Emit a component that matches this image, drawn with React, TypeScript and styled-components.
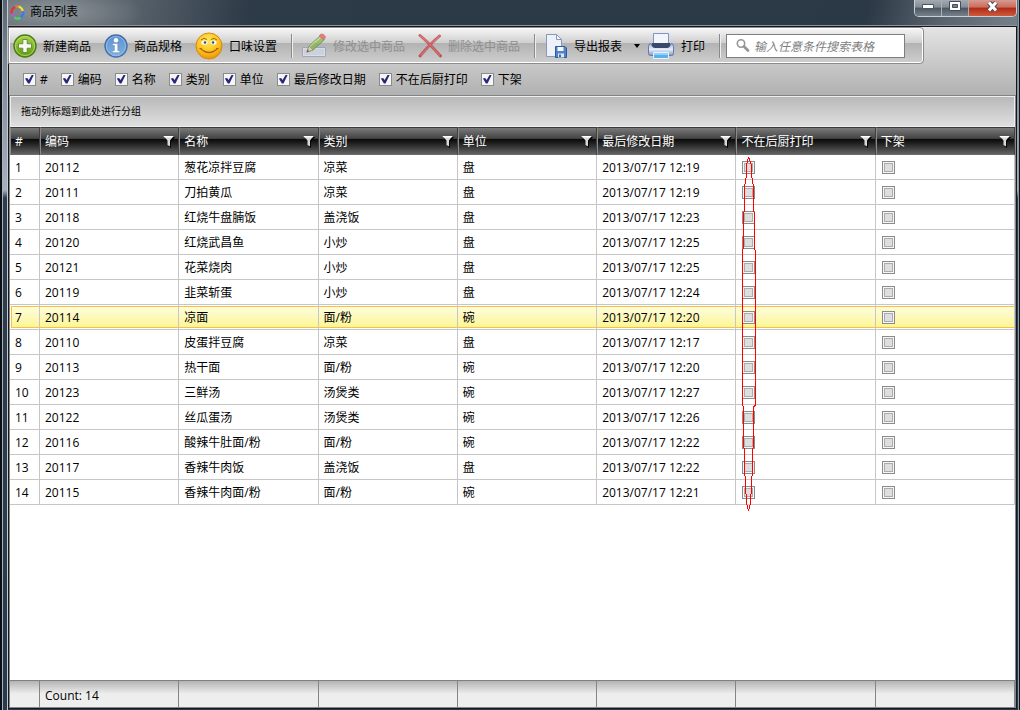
import React from 'react';
import styled, { createGlobalStyle, css } from 'styled-components';

const GlobalStyle = createGlobalStyle`
  * { box-sizing: border-box; }
  body {
    margin: 0;
    font-family: "Open Sans", "Noto Sans CJK SC", sans-serif;
    font-size: 12px;
    line-height: 16px;
    color: #000;
  }
  button, input { font: inherit; color: inherit; }
`;

const Frame = styled.div`
  min-height: 100vh;
  display: flex;
  flex-direction: column;
  padding: 0 3px 1px 8px;
  background:
    linear-gradient(90deg, #0b1016 2px, #a9b3bb 2px 3px, transparent 3px 7px, #c3cad1 7px 8px, transparent 8px),
    linear-gradient(270deg, #10161d 1px, #8e9aa4 1px 2px, transparent 2px),
    linear-gradient(180deg, #59636c 0, #7c8792 60px, #a7b1be 190px, #2e3c4b 198px, #2b3a4a 100%);
`;

const TitleBar = styled.header`
  display: flex;
  align-items: flex-start;
  justify-content: space-between;
  height: 26px;
  border-bottom: 1px solid #8b949b;
  background:
    radial-gradient(ellipse 90px 26px at 45px 12px, rgba(160, 166, 170, 0.75), transparent),
    linear-gradient(100deg, #626b73 0, #59636c 120px, #2d3a47 240px, #2b3845 85%, #56616b 92%, #75818a 100%);
`;

const Title = styled.h1`
  display: flex;
  align-items: center;
  gap: 5px;
  margin: 4px 0 0 2px;
  font-size: 12px;
  font-weight: 400;
`;

const WindowButtons = styled.div`
  display: flex;
  height: 17px;
  border: 1px solid #c9d0d5;
  border-top: 0;
  border-radius: 0 0 5px 5px;
  overflow: hidden;
`;

const WindowButton = styled.button<{ $close?: boolean }>`
  display: flex;
  align-items: center;
  justify-content: center;
  width: ${(p) => (p.$close ? 47 : 27)}px;
  padding: 0 0 3px;
  border: 0;
  border-right: ${(p) => (p.$close ? 0 : 1)}px solid #a7b0b6;
  background: ${(p) =>
    p.$close
      ? 'linear-gradient(#d79a90 0, #c96d5f 45%, #b02a14 50%, #cf5a3c 100%)'
      : 'linear-gradient(#a4aab0 0, #848c94 45%, #4c5660 50%, #76818b 100%)'};
`;

const Client = styled.main`
  flex: 1;
  display: flex;
  flex-direction: column;
  border: 1px solid #15191d;
  background: #fff;
`;

const TopArea = styled.section`
  padding-top: 1px;
  border-bottom: 1px solid #808489;
  background: linear-gradient(#e4e4e4, #b1b1b1);
`;

const Toolbar = styled.div`
  display: flex;
  align-items: center;
  width: fit-content;
  height: 35px;
  padding-right: 17px;
  border: 1px solid #fff;
  border-radius: 0 3px 3px 0;
  outline: 1px solid #8c8c8c;
  background: linear-gradient(#f4f4f4 0, #cfcfcf 42%, #b3b3b3 44%, #cdcdcd 100%);
`;

const ToolButton = styled.button`
  display: flex;
  align-items: center;
  gap: 6px;
  height: 32px;
  padding: 0 10px 0 3px;
  border: 0;
  background: none;
  white-space: nowrap;
  &:disabled { color: #8f8f8f; }
  &:disabled svg { opacity: 0.65; }
`;

const DropButton = styled.button`
  display: flex;
  align-items: center;
  width: 12px;
  height: 32px;
  padding: 0 2px;
  border: 0;
  background: none;
`;

const Caption = styled.span`
  padding-top: 2px;
`;

const Separator = styled.span`
  width: 2px;
  height: 24px;
  margin: 0 5px 0 4px;
  border-left: 1px solid #8a8a8a;
  border-right: 1px solid #eee;
`;

const SearchBox = styled.label`
  display: flex;
  align-items: center;
  gap: 4px;
  width: 179px;
  height: 24px;
  padding: 0 8px;
  border: 1px solid #7e7e7e;
  background: #fff;
`;

const SearchInput = styled.input`
  flex: 1;
  min-width: 0;
  padding: 2px 0 0;
  border: 0;
  outline: 0;
  background: none;
  &::placeholder { color: #808080; font-style: italic; opacity: 1; }
`;

const ColumnToggles = styled.div`
  display: flex;
  align-items: center;
  gap: 13px;
  height: 32px;
  padding-left: 14px;
`;

const Toggle = styled.label`
  display: flex;
  align-items: center;
  gap: 4px;
`;

const CheckBox = styled.input`
  appearance: none;
  display: block;
  flex: none;
  width: 13px;
  height: 13px;
  margin: 0;
  padding: 1px;
  border: 1px solid #8b8b8b;
  background: #f6f6f6;
  &::after {
    content: "";
    display: block;
    box-sizing: border-box;
    width: 9px;
    height: 9px;
  }
  &:checked::after {
    background: #27277c;
    clip-path: polygon(0 45%, 25% 38%, 42% 62%, 78% 0, 100% 0, 52% 100%, 34% 100%);
  }
  &:disabled::after {
    border: 1px solid #acacac;
    background: #dedede;
  }
`;

const GridArea = styled.section`
  flex: 1;
  display: flex;
  flex-direction: column;
  border: solid #85888b;
  border-width: 0 1px 1px;
`;

const GroupPanel = styled.div`
  height: 31px;
  padding: 6px 10px 0;
  border: 1px solid #eceef1;
  font-size: 10px;
  background: linear-gradient(#b9b9b9, #dfdfdf);
`;

const Table = styled.table`
  width: 100%;
  table-layout: fixed;
  border-collapse: separate;
  border-spacing: 0;
`;

const HeadCell = styled.th<{ $narrow?: boolean }>`
  width: ${(p) => (p.$narrow ? '30px' : 'auto')};
  height: 28px;
  padding: 0 3px 0 4px;
  border-top: 1px solid #3c3c3c;
  border-bottom: 1px solid #6b6b6b;
  border-left: 1px solid #8a8a8a;
  border-right: 1px solid #404040;
  color: #fff;
  font-weight: 400;
  text-align: left;
  background: linear-gradient(#7a7a7a 0, #444 40%, #0c0c0c 44%, #1a1a1a 55%, #626262 100%);
`;

const HeadContent = styled.div`
  display: flex;
  align-items: center;
  justify-content: space-between;
`;

const Cell = styled.td`
  height: 25px;
  padding: 2px 5px 0;
  border-right: 1px solid #c6c6c6;
  border-bottom: 1px solid #c6c6c6;
  white-space: nowrap;
`;

const CheckCell = styled(Cell)`
  position: relative;
  padding: 0 6px;
`;

const selectedRow = css`
  ${Cell} {
    background: linear-gradient(#fff 1px, #fac23a 1px 2px, #fffcdc 2px, #fcf697 22px, #fac23a 22px 23px, #fff 23px);
  }
  ${Cell}:first-child {
    background:
      linear-gradient(90deg, #fff 1px, transparent 1px),
      linear-gradient(#fac23a, #fac23a) 1px 1px / 1px 22px no-repeat,
      linear-gradient(#fff 1px, #fac23a 1px 2px, #fffcdc 2px, #fcf697 22px, #fac23a 22px 23px, #fff 23px);
  }
`;

const Row = styled.tr<{ $selected?: boolean }>`
  ${(p) => p.$selected && selectedRow}
`;

const Mark = styled.svg`
  position: absolute;
  left: 5px;
  top: 2px;
  z-index: 1;
  pointer-events: none;
`;

const Summary = styled.footer`
  display: grid;
  grid-template-columns: 30px repeat(7, 1fr);
  height: 27px;
  margin-top: auto;
  border-top: 1px solid #808080;
  background: linear-gradient(#b4b4b4 0, #eee 50%, #eee 100%);
`;

const SummaryCell = styled.div`
  padding: 7px 5px 0;
  border-right: 1px solid #858585;
`;

const LogoIcon = () => (
  <svg width="15" height="15" viewBox="0 0 15 15" fill="none" strokeWidth="2.2">
    <path d="M1.500 8.500Q1 4 5 2" stroke="#ee2f32" />
    <path d="M5.500 1.800Q7 1 8.500 1.500" stroke="#f4744a" />
    <path d="M8.500 1.500Q12 2.500 12.800 6" stroke="#f2e22e" />
    <path d="M13.300 6.500Q13.500 10.500 10.500 12.500" stroke="#3b7bf2" />
    <path d="M10.500 12.800Q7.500 14.500 4.500 12.500" stroke="#41dc56" />
    <path d="M4.500 12L2 9" stroke="#b45cd8" />
  </svg>
);

const AddIcon = () => (
  <svg width="24" height="24" viewBox="0 0 24 24">
    <defs>
      <linearGradient id="add" x2="0" y2="1"><stop stopColor="#a9d34a" /><stop offset="1" stopColor="#5c9a12" /></linearGradient>
    </defs>
    <circle cx="12" cy="12" r="11" fill="url(#add)" stroke="#4d7d16" strokeWidth="1.4" />
    <circle cx="12" cy="12" r="9.6" fill="none" stroke="#bfe06e" strokeWidth=".8" />
    <path d="M9.800 5.500h4.400v4.300h4.300v4.400h-4.300v4.300H9.800v-4.300H5.500V9.800h4.300z" fill="#f7f9f2" stroke="#55801d" strokeWidth=".8" />
  </svg>
);

const InfoIcon = () => (
  <svg width="24" height="24" viewBox="0 0 24 24">
    <defs>
      <linearGradient id="info" x2="0" y2="1"><stop stopColor="#5e8fca" /><stop offset="1" stopColor="#7fb2e6" /></linearGradient>
    </defs>
    <circle cx="12" cy="12" r="11" fill="url(#info)" stroke="#4470aa" strokeWidth="1.4" />
    <circle cx="12" cy="12" r="9.6" fill="none" stroke="#9cc0ea" strokeWidth=".8" />
    <circle cx="12" cy="6.300" r="2.200" fill="#fff" />
    <path d="M8.500 9.500h5.300v7.200h2v2H8.400v-2h2v-5.200H8.500z" fill="#fff" stroke="#5d83b3" strokeWidth=".5" />
  </svg>
);

const SmileIcon = () => (
  <svg width="28" height="28" viewBox="0 0 28 28">
    <defs>
      <radialGradient id="smile" cx=".45" cy=".3" r=".75"><stop stopColor="#ffe75c" /><stop offset=".6" stopColor="#fbc01e" /><stop offset="1" stopColor="#e88c06" /></radialGradient>
    </defs>
    <circle cx="14" cy="14" r="13" fill="url(#smile)" stroke="#d58a10" />
    <path d="M6 8q3-3 6-.5M16 7.500q3-2.500 6 .5" fill="none" stroke="#a56308" />
    <ellipse cx="9.500" cy="10.500" rx="3" ry="2" fill="#fff" />
    <ellipse cx="18.500" cy="10.500" rx="3" ry="2" fill="#fff" />
    <circle cx="10" cy="10.500" r="1.300" fill="#31536b" />
    <circle cx="18" cy="10.500" r="1.300" fill="#31536b" />
    <path d="M4.500 16.500q1.500.5 2-.5M23.500 16.500q-1.500.5-2-.5M5.500 16.500q8.500 8 17 0" fill="none" stroke="#a8650a" strokeWidth="1.300" />
  </svg>
);

const EditIcon = () => (
  <svg width="26" height="26" viewBox="0 0 26 26">
    <path d="M1.500 14.500h23v9h-23z" fill="#e8edf6" stroke="#8e9cb8" />
    <path d="M3 16h20v6H3z" fill="#d3dcec" />
    <path d="M6 19l2-6L19 3l4 4-11 10z" fill="#7cb342" stroke="#4e7f28" />
    <path d="M8 14L20 4" stroke="#b8dc7e" strokeWidth="1.500" />
    <path d="M18 3l2-2q3-.5 4.500 3L23 7z" fill="#e8483a" stroke="#b43a30" strokeWidth=".7" />
    <path d="M6 19l2-6 4 4z" fill="#f1d9a4" stroke="#8a7444" strokeWidth=".7" />
    <path d="M5.500 19.500l1-3 1.700 1.800z" fill="#333" />
  </svg>
);

const DeleteIcon = () => (
  <svg width="24" height="24" viewBox="0 0 24 24">
    <path d="M2 1.500Q10 8 22.500 22M21.500 2Q12 10 2 22" fill="none" stroke="#b3161a" strokeWidth="2.800" strokeLinecap="round" />
    <path d="M2.500 2Q10 8 21.500 21M21 2.500Q12 10 3 21" fill="none" stroke="#e5484a" strokeWidth="1.200" strokeLinecap="round" />
  </svg>
);

const ExportIcon = () => (
  <svg width="24" height="26" viewBox="0 0 24 26">
    <path d="M2.500 1.500h10l5 5v17h-15z" fill="#edf1fa" stroke="#8797bd" />
    <path d="M12.500 1.500v5h5z" fill="#fff" stroke="#8797bd" strokeLinejoin="round" />
    <path d="M11.500 13.500H21l1.500 1.500v9.500h-11z" fill="#4f83c6" stroke="#2d5b9b" />
    <path d="M13.500 14h6v4h-6z" fill="#f4f8fd" />
    <path d="M14 20.500h6v4h-6z" fill="#dce8f6" />
    <path d="M15 21.500h2v2.500h-2z" fill="#3a6bab" />
  </svg>
);

const PrinterIcon = () => (
  <svg width="28" height="28" viewBox="0 0 28 28">
    <defs>
      <linearGradient id="printer" x2="0" y2="1"><stop stopColor="#a3b3da" /><stop offset=".5" stopColor="#e6ecf8" /><stop offset="1" stopColor="#7f95c8" /></linearGradient>
    </defs>
    <path d="M6.500 1.500h15v11h-15z" fill="#f2f5fc" stroke="#8193c2" />
    <path d="M4 11.500q-2.500 0-2.500 3v7q0 2 2 2h21q2 0 2-2v-7q0-3-2.500-3l-1 2.500H5z" fill="url(#printer)" stroke="#6478ac" />
    <path d="M5 11h18v2q0 3-3 3H8q-3 0-3-3z" fill="#39496d" />
    <path d="M6.500 20.500h15v6h-15z" fill="#58b2ee" stroke="#e9f1fb" />
    <path d="M7 21h14v2H7z" fill="#91d2fa" />
  </svg>
);

const SearchIcon = () => (
  <svg width="15" height="15" viewBox="0 0 15 15" fill="none" stroke="#969696">
    <circle cx="6" cy="5.500" r="3.700" strokeWidth="1.600" />
    <path d="M9 8.500l4 4" strokeWidth="2.800" strokeLinecap="round" />
  </svg>
);

const FunnelIcon = () => (
  <svg width="12" height="13" viewBox="0 0 12 13">
    <path d="M1 2h11L8 6.500V13L5.500 11.500V6.500z" fill="#000" />
    <path d="M.5 1h10L7 5.500v6L4.500 10V5.500z" fill="#d9d9d9" />
    <path d="M.5 1h10L9.500 2.500h-8z" fill="#fff" />
  </svg>
);

const columns = ['编码', '名称', '类别', '单位', '最后修改日期', '不在后厨打印', '下架'];

const products: string[][] = [
  ['20112', '葱花凉拌豆腐', '凉菜', '盘', '12:19'],
  ['20111', '刀拍黄瓜', '凉菜', '盘', '12:19'],
  ['20118', '红烧牛盘腩饭', '盖浇饭', '盘', '12:23'],
  ['20120', '红烧武昌鱼', '小炒', '盘', '12:25'],
  ['20121', '花菜烧肉', '小炒', '盘', '12:25'],
  ['20119', '韭菜斩蛋', '小炒', '盘', '12:24'],
  ['20114', '凉面', '面/粉', '碗', '12:20'],
  ['20110', '皮蛋拌豆腐', '凉菜', '盘', '12:17'],
  ['20113', '热干面', '面/粉', '碗', '12:20'],
  ['20123', '三鲜汤', '汤煲类', '碗', '12:27'],
  ['20122', '丝瓜蛋汤', '汤煲类', '碗', '12:26'],
  ['20116', '酸辣牛肚面/粉', '面/粉', '碗', '12:22'],
  ['20117', '香辣牛肉饭', '盖浇饭', '盘', '12:22'],
  ['20115', '香辣牛肉面/粉', '面/粉', '碗', '12:21'],
];

const RedMark = () => (
  <Mark width="16" height="356" viewBox="0 0 16 356" fill="none" stroke="#f00" shapeRendering="crispEdges">
    <path d="M7.500 0L5.500 8V18L3.500 30V48L2.500 62V80L1.500 105V248L2.500 250V290L3.500 292V318L4.500 320V336L5.500 338V346L7.500 354L9.500 346V338L10.500 336V320L11.500 318V292L12.500 290V250L14.500 248V105L13.500 80V62L12.500 48V30L10.500 18V8Z" />
  </Mark>
);

export default function App() {
  return (
    <>
      <GlobalStyle />
      <Frame>
        <TitleBar>
          <Title><LogoIcon />商品列表</Title>
          <WindowButtons>
            <WindowButton aria-label="最小化">
              <svg width="12" height="5"><path d="M.5.500h11v4H.500z" fill="#fff" stroke="#4a5460" /></svg>
            </WindowButton>
            <WindowButton aria-label="最大化">
              <svg width="13" height="11"><path d="M.5.500h11v9H.500z" fill="#fff" stroke="#434d5b" /><path d="M3.500 3.500h5v3h-5z" fill="#75808b" stroke="#434d5b" /></svg>
            </WindowButton>
            <WindowButton $close aria-label="关闭">
              <svg width="13" height="11"><path d="M3 1.500l7 8M10 1.500l-7 8" stroke="#4e4a5a" strokeWidth="5" /><path d="M3 1.500l7 8M10 1.500l-7 8" stroke="#fff" strokeWidth="3" /></svg>
            </WindowButton>
          </WindowButtons>
        </TitleBar>
        <Client>
          <TopArea>
            <Toolbar>
              <ToolButton><AddIcon /><Caption>新建商品</Caption></ToolButton>
              <ToolButton><InfoIcon /><Caption>商品规格</Caption></ToolButton>
              <ToolButton><SmileIcon /><Caption>口味设置</Caption></ToolButton>
              <Separator />
              <ToolButton disabled><EditIcon /><Caption>修改选中商品</Caption></ToolButton>
              <ToolButton disabled><DeleteIcon /><Caption>删除选中商品</Caption></ToolButton>
              <Separator />
              <ToolButton><ExportIcon /><Caption>导出报表</Caption></ToolButton>
              <DropButton aria-label="导出选项">
                <svg width="7" height="4"><path d="M0 0h6L3 4z" /></svg>
              </DropButton>
              <ToolButton><PrinterIcon /><Caption>打印</Caption></ToolButton>
              <Separator />
              <SearchBox>
                <SearchIcon />
                <SearchInput type="text" aria-label="搜索" placeholder="输入任意条件搜索表格" />
              </SearchBox>
            </Toolbar>
            <ColumnToggles>
              {['#', ...columns].map((name) => (
                <Toggle key={name}><CheckBox type="checkbox" defaultChecked /><Caption>{name}</Caption></Toggle>
              ))}
            </ColumnToggles>
          </TopArea>
          <GridArea>
            <GroupPanel>拖动列标题到此处进行分组</GroupPanel>
            <Table>
              <thead>
                <tr>
                  <HeadCell $narrow><HeadContent><Caption>#</Caption></HeadContent></HeadCell>
                  {columns.map((name) => (
                    <HeadCell key={name}><HeadContent><Caption>{name}</Caption><FunnelIcon /></HeadContent></HeadCell>
                  ))}
                </tr>
              </thead>
              <tbody>
                {products.map(([code, name, kind, unit, time], i) => (
                  <Row key={code} $selected={i === 6}>
                    <Cell>{i + 1}</Cell>
                    <Cell>{code}</Cell>
                    <Cell>{name}</Cell>
                    <Cell>{kind}</Cell>
                    <Cell>{unit}</Cell>
                    <Cell>2013/07/17 {time}</Cell>
                    <CheckCell>
                      <CheckBox type="checkbox" disabled aria-label={`${name} 不在后厨打印`} />
                      {i === 0 && <RedMark />}
                    </CheckCell>
                    <CheckCell><CheckBox type="checkbox" disabled aria-label={`${name} 下架`} /></CheckCell>
                  </Row>
                ))}
              </tbody>
            </Table>
            <Summary>
              <SummaryCell />
              <SummaryCell>Count: 14</SummaryCell>
              {columns.slice(1).map((name) => <SummaryCell key={name} />)}
            </Summary>
          </GridArea>
        </Client>
      </Frame>
    </>
  );
}
